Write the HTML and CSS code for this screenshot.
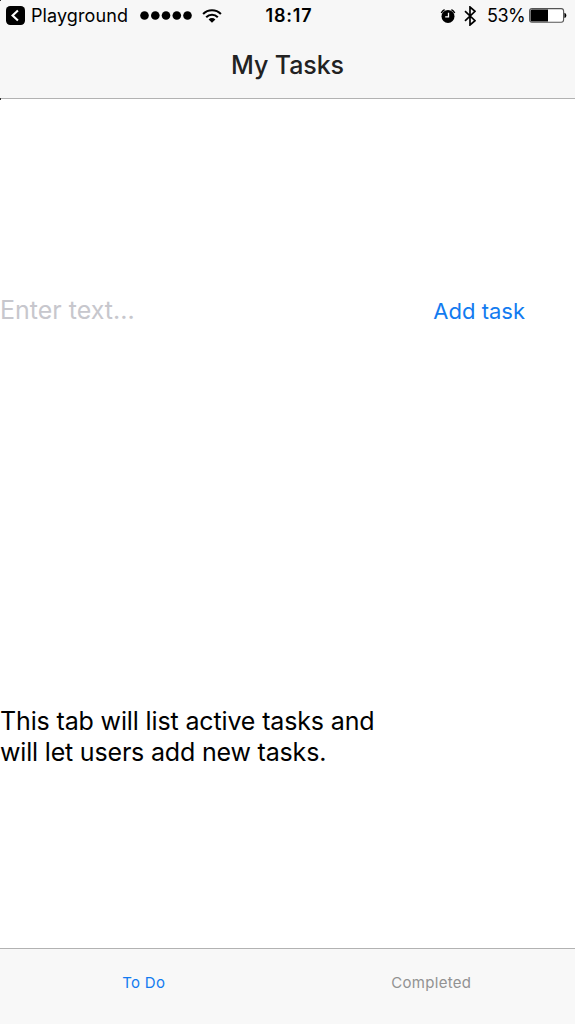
FILE: index.html
```html
<!DOCTYPE html>
<html lang="en">
<head>
<meta charset="utf-8">
<title>My Tasks</title>
<link rel="stylesheet" href="styles.css">
</head>
<body>
<div class="screen">
  <header class="navbar">
    <div class="status">
      <div class="status-left">
        <svg class="back" viewBox="0 0 18 18"><rect width="18" height="18" rx="4"/><path d="M11.3 4.2 6.2 9l5.1 4.8" fill="none" stroke="#fff" stroke-width="2"/></svg>
        <span class="app">Playground</span>
        <svg class="signal" viewBox="0 0 52 9"><circle cx="4.5" cy="4.5" r="4.3"/><circle cx="15.3" cy="4.5" r="4.3"/><circle cx="26" cy="4.5" r="4.3"/><circle cx="36.8" cy="4.5" r="4.3"/><circle cx="47.5" cy="4.5" r="4.3"/></svg>
        <svg class="wifi" viewBox="0 0 20 14"><g fill="none" stroke="#000" stroke-width="2.1"><path d="M1.1 5A12.6 12.6 0 0 1 18.9 5"/><path d="M4.2 8.2A8.2 8.2 0 0 1 15.8 8.2"/></g><path d="M6.6 10.4a4.8 4.8 0 0 1 6.8 0L10 13.7z"/></svg>
      </div>
      <span class="time">18:17</span>
      <div class="status-right">
        <svg class="alarm" viewBox="0 0 16 16"><circle cx="8" cy="8.4" r="6.5"/><path d="M1.3 5A7.4 7.4 0 0 1 4.6 1.7M14.7 5A7.4 7.4 0 0 0 11.4 1.7" fill="none" stroke="#000" stroke-width="1.5"/><path d="M8.5 4.8v4H5.2" fill="none" stroke="#fff" stroke-width="1.3"/></svg>
        <svg class="bluetooth" viewBox="0 0 12 20"><path d="M1 5.2 11 14.7 6 19V1l5 4.3L1 14.8" fill="none" stroke="#000" stroke-width="1.7"/></svg>
        <span class="percent">53%</span>
        <svg class="battery" viewBox="0 0 38 15"><rect x=".6" y=".6" width="34" height="13.6" rx="2.4" fill="#fff" stroke="#555" stroke-width="1.1"/><path d="M1.5 3a1.5 1.5 0 0 1 1.5-1.5h16v12H3A1.5 1.5 0 0 1 1.5 12zM35.4 4.8q2 .6 2 2.6t-2 2.6z"/></svg>
      </div>
    </div>
    <h1 class="title">My Tasks</h1>
  </header>
  <main class="content">
    <form class="entry">
      <input class="field" type="text" placeholder="Enter text..." aria-label="Task">
      <button class="add" type="button">Add task</button>
    </form>
    <p class="note"><span class="line">This tab will list active tasks and</span><span class="line second">will let users add new tasks.</span></p>
  </main>
  <nav class="tabs">
    <a class="tab active">To Do</a>
    <a class="tab">Completed</a>
  </nav>
</div>
</body>
</html>
```
FILE: styles.css
```css
* { box-sizing: border-box; }
body { margin: 0; background: #fff; color: #000; font-family: Inter, "Liberation Sans", sans-serif; }
svg { display: block; flex: none; }
.screen { display: flex; flex-direction: column; width: 575px; height: 1024px; overflow: hidden; }
.navbar { position: relative; flex: none; height: 99px; background: #f7f7f7; border-bottom: 1px solid #b2b2b2; }
/* Dark corner marks on the bar's left edge */
.navbar::before, .navbar::after { content: ""; position: absolute; left: 0; width: 1px; height: 1px; background: #333; }
.navbar::before { top: 0; }
.navbar::after { height: 2px; bottom: -2px; }
.status { display: grid; grid-template-columns: 1fr auto 1fr; align-items: center; height: 31px; padding: 0 8px 0 6px; white-space: nowrap; }
.status-left, .status-right { display: flex; align-items: center; }
.status-right { justify-content: flex-end; }
.back { width: 19px; height: 19px; }
.app { width: 97px; margin-left: 6px; padding-top: 1px; font-size: 18px; line-height: 22px; letter-spacing: 0.1px; }
.signal { width: 52px; height: 9px; margin-left: 12px; }
.wifi { width: 20px; height: 14px; margin-left: 10px; }
.time { padding: 1px 0 0 5px; font-size: 18px; line-height: 22px; font-weight: 600; letter-spacing: 0.8px; }
.alarm { width: 16px; height: 16px; }
.bluetooth { width: 12px; height: 20px; margin-left: 8px; }
.percent { width: 37px; margin-left: 11px; padding-top: 1px; font-size: 18px; line-height: 22px; letter-spacing: -0.5px; }
.battery { width: 38px; height: 15px; margin-left: 5px; }
.title { margin: 0; padding-top: 18px; font-size: 25px; line-height: 32px; font-weight: 550; letter-spacing: -0.1px; text-align: center; color: #222; }
.content { flex: 1; display: flex; flex-direction: column; }
.entry { display: flex; align-items: center; height: 422px; padding-right: 50px; }
.field { flex: 1; min-width: 0; height: 46px; padding: 0; border: 0; outline: 0; background: none; font: 25px Inter, sans-serif; }
.field::placeholder { color: #c7c7cd; opacity: 1; }
.add { padding: 2px 0 0; border: 0; background: none; color: #127bf0; font: 22px Inter, sans-serif; white-space: nowrap; }
.note { display: flex; flex-direction: column; justify-content: center; height: 426px; padding-top: 5px; margin: 0; font-size: 25px; line-height: 31px; white-space: nowrap; }
.line { letter-spacing: -0.14px; }
.second { letter-spacing: -0.18px; }
.tabs { flex: none; display: flex; height: 76px; background: #f8f8f8; border-top: 1px solid #b2b2b2; }
.tab { flex: 1; padding-top: 24px; text-align: center; font-size: 15px; line-height: 20px; letter-spacing: 0.3px; color: #929292; }
.active { color: #127bf0; }
```
